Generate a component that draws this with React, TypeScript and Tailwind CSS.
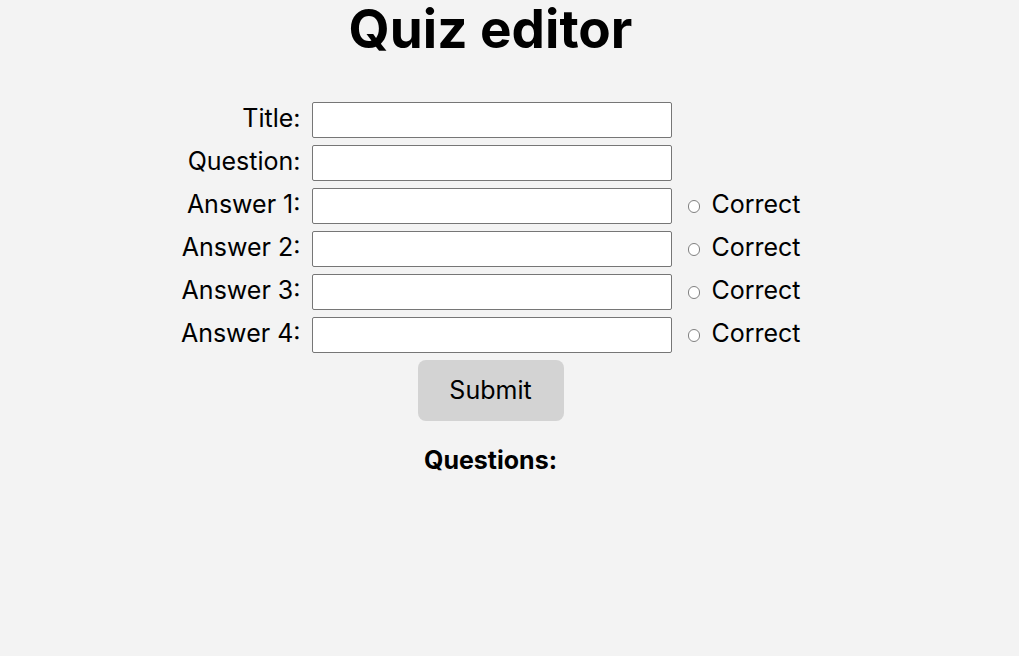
const rows = ['Title:', 'Question:', 'Answer 1:', 'Answer 2:', 'Answer 3:', 'Answer 4:']

export default function App() {
  return (
    <div className="min-h-screen w-full bg-[#f3f3f3] text-black" style={{ fontFamily: 'Inter, "Noto Sans", sans-serif' }}>
      <div className="w-[981px] flex flex-col items-center">
        <h1 className="text-[53px] leading-[58px] font-bold">Quiz editor</h1>

        {/* Form */}
        <div className="mt-[44px] grid grid-cols-[120px_360px_118px] gap-x-[11px] gap-y-[7px] items-start text-[25px] leading-[32px]">
          {rows.map((label, i) => (
            <div key={label} className="contents">
              <label className="text-right whitespace-nowrap">{label}</label>
              <input type="text" className="h-[36px] w-[360px] bg-white border border-[#767676] rounded-[2px]" />
              {i >= 2 ? (
                <div className="flex items-start h-[36px] pl-[5px] whitespace-nowrap">
                  <span className="mt-[12px] mr-[11px] w-[13px] h-[13px] rounded-full border border-[#808080] bg-white" />
                  <span>Correct</span>
                </div>
              ) : (
                <div />
              )}
            </div>
          ))}
        </div>

        <button className="mt-[7px] w-[146px] h-[61px] bg-[#d3d3d3] rounded-lg text-[25px]">Submit</button>

        <h3 className="mt-[23px] text-[25px] leading-[32px] font-bold">Questions:</h3>
      </div>
    </div>
  )
}
